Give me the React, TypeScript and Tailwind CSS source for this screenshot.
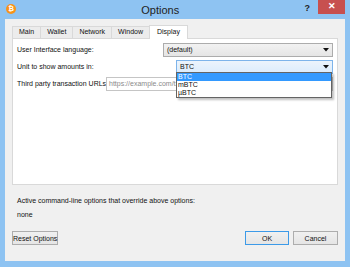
import React from 'react';

const tabs = ['Main', 'Wallet', 'Network', 'Window'];

const Arrow = () => (
  <svg width="6" height="4" viewBox="0 0 6 4" className="shrink-0">
    <path d="M0 0H6L3 3.5Z" fill="#111" />
  </svg>
);

export default function App() {
  return (
    <div
      className="w-[350px] h-[267px] bg-[#8ec3f2] flex flex-col text-[7px] text-[#111] overflow-hidden"
      style={{ fontFamily: '"Liberation Sans", Arial, sans-serif' }}
    >
      {/* Title bar */}
      <div className="h-[19px] flex items-start relative">
        <div className="w-[10px] h-[10px] rounded-full bg-[#f7931a] ml-[6px] mt-[4px] flex items-center justify-center text-white text-[7px] font-bold">
          ₿
        </div>
        <div className="flex-1 text-center text-[11px] text-[#222] mt-[2px]">Options</div>
        <div className="text-[9px] font-bold text-[#222] mt-[2px] mr-[8px]">?</div>
        <div className="w-[27px] h-[14px] bg-[#c7504f] mr-[5px] flex items-center justify-center text-white text-[9px] font-bold">
          ✕
        </div>
      </div>

      {/* Client area */}
      <div className="flex-1 mx-[5px] mb-[6px] bg-[#f0f0f0] flex flex-col px-[7px] pt-[5px]">
        {/* Tabs */}
        <div className="flex items-end h-[14px]">
          {tabs.map((t) => (
            <div
              key={t}
              className="h-[12px] border border-[#d9d9d9] border-b-0 bg-[#ececec] px-[6px] -mr-px flex items-center"
            >
              {t}
            </div>
          ))}
          <div className="h-[14px] border border-[#d9d9d9] border-b-0 bg-white px-[7px] flex items-center relative z-10 -mb-px">
            Display
          </div>
        </div>

        {/* Pane */}
        <div className="h-[147px] border border-[#d9d9d9] bg-white relative px-[4px] pt-[4px] flex flex-col gap-[3px]">
          <div className="flex items-center h-[14px]">
            <span className="w-[146px] shrink-0">User Interface language:</span>
            <div className="flex-1 h-[14px] border border-[#acacac] bg-gradient-to-b from-[#f2f2f2] to-[#e5e5e5] flex items-center justify-between px-[3px]">
              <span>(default)</span>
              <Arrow />
            </div>
          </div>
          <div className="flex items-center h-[14px]">
            <span className="w-[159px] shrink-0">Unit to show amounts in:</span>
            <div className="flex-1 h-[14px] border border-[#7eb4ea] bg-gradient-to-b from-[#ecf4fc] to-[#dcecfc] flex items-center justify-between px-[3px]">
              <span>BTC</span>
              <Arrow />
            </div>
          </div>
          <div className="flex items-center h-[14px]">
            <span className="w-[89px] shrink-0 whitespace-nowrap">Third party transaction URLs</span>
            <div className="flex-1 h-[14px] border border-[#c5c5c5] bg-white flex items-center px-[2px] text-[#8a8a8a] overflow-hidden whitespace-nowrap">
              https://example.com/tx/%s
            </div>
          </div>

          {/* Dropdown list */}
          <div className="absolute left-[163px] top-[33px] w-[156px] h-[26px] bg-white border border-[#646464] shadow-[2px_2px_2px_rgba(0,0,0,0.25)] flex flex-col z-20">
            <div className="h-[8px] leading-[8px] bg-[#3399ff] text-white px-[1px]">BTC</div>
            <div className="h-[8px] leading-[8px] px-[1px]">mBTC</div>
            <div className="h-[8px] leading-[8px] px-[1px]">µBTC</div>
          </div>
        </div>

        <div className="mt-[11px] h-[10px] flex items-center pl-[5px]">
          Active command-line options that override above options:
        </div>
        <div className="mt-[4px] h-[10px] flex items-center pl-[5px]">none</div>

        {/* Buttons */}
        <div className="mt-[11px] flex items-center">
          <button className="h-[14px] w-[46px] border border-[#adadad] bg-gradient-to-b from-[#f0f0f0] to-[#e5e5e5] text-[7px] leading-none whitespace-nowrap">
            Reset Options
          </button>
          <div className="flex-1" />
          <button className="w-[44px] h-[14px] border border-[#3c9ae8] bg-gradient-to-b from-[#f0f0f0] to-[#e5e5e5] text-[7px] leading-none mr-[4px]">
            OK
          </button>
          <button className="w-[45px] h-[14px] border border-[#adadad] bg-gradient-to-b from-[#f0f0f0] to-[#e5e5e5] text-[7px] leading-none">
            Cancel
          </button>
        </div>
      </div>
    </div>
  );
}
